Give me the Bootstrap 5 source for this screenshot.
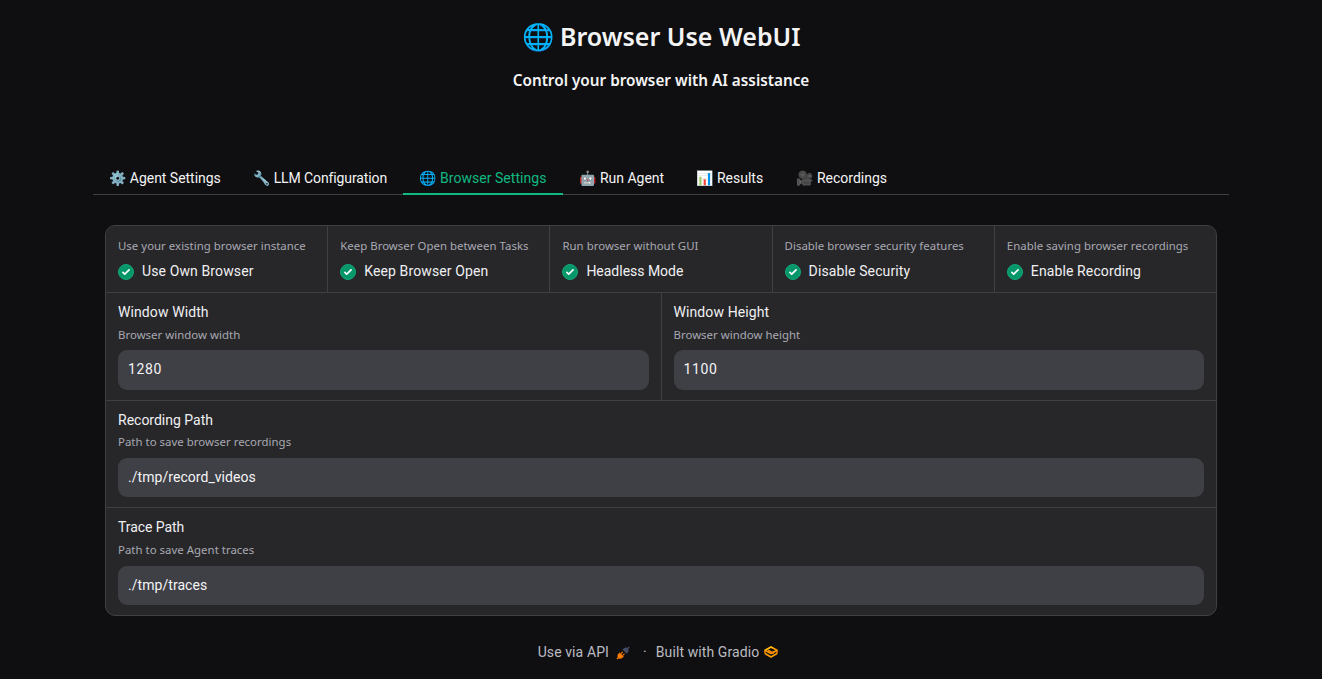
<!DOCTYPE html>
<html lang="en" data-bs-theme="dark">
<head>
<meta charset="utf-8">
<meta name="viewport" content="width=device-width, initial-scale=1">
<title>Browser Use WebUI</title>
<link rel="stylesheet" href="https://cdn.jsdelivr.net/npm/bootstrap@5.3.0/dist/css/bootstrap.min.css">
<style>
  body { background: #0f0f11; color: #f4f4f5; font: 14px/20px Roboto, "Noto Color Emoji", sans-serif; letter-spacing: 0; overflow: hidden; }
  .page-wrap { width: 1136px; margin-left: 93px; }
  .hero { height: 162px; padding-top: 18px; }
  .hero h1 { font: 600 25px/36px "Noto Sans", sans-serif; color: #f4f4f5; margin-bottom: 16px; }
  .hero h1 .globe { font-size: 26px; }
  .hero h2 { font: 600 15.3px/20px "Noto Sans", sans-serif; color: #f4f4f5; }
  .settings-tabs { height: 33px; border-bottom: 1px solid #3f3f46; --bs-nav-link-padding-y: 6px; --bs-nav-link-padding-x: 16px; }
  .settings-tabs .nav-link { color: #f4f4f5; height: 33px; line-height: 20px; white-space: nowrap; border-bottom: 2px solid transparent; }
  .settings-tabs .nav-link.active { color: #10b981; border-color: #10b981; }
  .w-a { width: 144px; letter-spacing: -.03px; } .w-b { width: 166px; letter-spacing: -.11px; } .w-c { width: 160px; letter-spacing: .04px; } .w-d { width: 117px; } .w-e { width: 100px; }
  .panel { margin: 30px 12px 0; height: 391px; background: #27272a; border: 1px solid #3f3f46; border-radius: 10px; overflow: hidden; color: #f0f0f2; }
  .panel-row { border-bottom: 1px solid #3f3f46; }
  .panel-row:last-child { border-bottom: 0; }
  .checks { height: 67px; }
  .panel-cell { flex: 1 1 0; min-width: 0; padding: 0 12px; }
  .panel-cell + .panel-cell { border-left: 1px solid #3f3f46; }
  .hint { font: 11.4px/16px "Noto Sans", sans-serif; letter-spacing: .03px; color: #a9a9b2; white-space: nowrap; }
  .checks .panel-cell { padding-top: 12px; }
  .check-line { display: flex; margin-top: 7px; }
  .check-line .form-check-label { letter-spacing: .12px; }
  .check-line .form-check-label.tight { letter-spacing: -.02px; }
  .tick { width: 16px; height: 16px; margin: 3px 8px 0 0; background: #059669; border: 1px solid #10a877; border-radius: 50%; }
  .fields .panel-cell { padding-top: 9px; }
  .field-label { height: 20px; }
  .h-size .field-label { letter-spacing: .1px; }
  .h-trace .field-label { letter-spacing: -.06px; }
  .fields .hint { margin-top: 5px; }
  .fields .form-control { height: 39px; margin-top: 7px; padding: 0 10px 2px; background: #3f3f46; color: #f4f4f5; border: 0; border-radius: 9px; font-size: 14px; line-height: 20px; letter-spacing: .05px; }
  .h-size { height: 108px; } .h-path { height: 107px; }
  .h-size .form-control { height: 40px; letter-spacing: .6px; }
  .h-path .hint { margin-top: 4px; }
  .h-path .form-control { margin-top: 8px; }
  .h-trace .hint { margin-top: 5px; }
  .h-trace .form-control { margin-top: 8px; }
  .page-foot { margin: 26px 6px 0 0; color: #bbbbc2; height: 20px; letter-spacing: .1px; }
  .plug { margin: 1px 0 0 7px; }
  .foot-dot { margin: 0 9px 0 13px; }
  .stack-logo { margin-left: 5px; }
</style>
</head>
<body>
<div class="page-wrap">
  <header class="hero text-center">
    <h1><span class="globe">🌐</span> Browser Use WebUI</h1>
    <h2 class="mb-0">Control your browser with AI assistance</h2>
  </header>

  <ul class="nav settings-tabs flex-nowrap">
    <li class="nav-item"><a class="nav-link w-a" href="#">⚙️ Agent Settings</a></li>
    <li class="nav-item"><a class="nav-link w-b" href="#">🔧 LLM Configuration</a></li>
    <li class="nav-item"><a class="nav-link w-c active" href="#">🌐 Browser Settings</a></li>
    <li class="nav-item"><a class="nav-link w-d" href="#">🤖 Run Agent</a></li>
    <li class="nav-item"><a class="nav-link w-e" href="#">📊 Results</a></li>
    <li class="nav-item"><a class="nav-link" href="#">🎥 Recordings</a></li>
  </ul>

  <svg class="d-none"><symbol id="check" viewBox="0 0 16 16"><path fill="#fff" d="M12.207 4.793a1 1 0 0 1 0 1.414l-5 5a1 1 0 0 1-1.414 0l-2-2a1 1 0 0 1 1.414-1.414L6.5 9.086l4.293-4.293a1 1 0 0 1 1.414 0z"/></symbol></svg>

  <main class="panel">
    <div class="panel-row checks d-flex">
      <div class="panel-cell"><div class="hint">Use your existing browser instance</div>
        <div class="check-line"><svg class="tick"><use href="#check"/></svg><label class="form-check-label">Use Own Browser</label></div></div>
      <div class="panel-cell"><div class="hint">Keep Browser Open between Tasks</div>
        <div class="check-line"><svg class="tick"><use href="#check"/></svg><label class="form-check-label">Keep Browser Open</label></div></div>
      <div class="panel-cell"><div class="hint">Run browser without GUI</div>
        <div class="check-line"><svg class="tick"><use href="#check"/></svg><label class="form-check-label tight">Headless Mode</label></div></div>
      <div class="panel-cell"><div class="hint">Disable browser security features</div>
        <div class="check-line"><svg class="tick"><use href="#check"/></svg><label class="form-check-label">Disable Security</label></div></div>
      <div class="panel-cell"><div class="hint">Enable saving browser recordings</div>
        <div class="check-line"><svg class="tick"><use href="#check"/></svg><label class="form-check-label">Enable Recording</label></div></div>
    </div>
    <div class="panel-row fields h-size d-flex">
      <div class="panel-cell"><div class="field-label">Window Width</div><div class="hint">Browser window width</div>
        <input class="form-control" value="1280"></div>
      <div class="panel-cell"><div class="field-label">Window Height</div><div class="hint">Browser window height</div>
        <input class="form-control" value="1100"></div>
    </div>
    <div class="panel-row fields h-path d-flex">
      <div class="panel-cell"><div class="field-label">Recording Path</div><div class="hint">Path to save browser recordings</div>
        <input class="form-control" value="./tmp/record_videos"></div>
    </div>
    <div class="panel-row fields h-path h-trace d-flex">
      <div class="panel-cell"><div class="field-label">Trace Path</div><div class="hint">Path to save Agent traces</div>
        <input class="form-control" value="./tmp/traces"></div>
    </div>
  </main>

  <footer class="page-foot d-flex justify-content-center align-items-center">
    <span>Use via API</span>
    <svg class="plug" width="14" height="14" viewBox="0 0 14 14">
      <path d="M1 13l2-2" stroke="#ff7c00" stroke-width="1.4"/>
      <path d="M3.6 6.4 7.8 10.6 6.2 12C4.8 13 3.2 12.8 2.2 11.8S1.2 9.2 2.2 8z" fill="#ff7c00"/>
      <path d="M5 7.5l1.7-1.7M6.8 9.3l1.7-1.7" stroke="#ff7c00" stroke-width="1.1"/>
      <path d="M6.4 3.6 10.6 7.8 12 6.2C13 5 12.8 3.4 11.8 2.4S9 1.2 8 2.2z" fill="#454d64"/>
      <path d="M11.4 2.8 13.2 1" stroke="#454d64" stroke-width="1.4"/>
    </svg>
    <span class="foot-dot">·</span>
    <span>Built with Gradio</span>
    <svg class="stack-logo" width="14" height="12" viewBox="0 0 14 12" fill="none" stroke-linejoin="round">
      <path d="M1 4.2 7 1 13 4.2 7 7.4zM1 7.6 7 10.9 13 7.6" stroke="#ff9d00" stroke-width="1.7"/>
      <path d="M1 4.2V7.6M13 4.2V7.6M4 4.2 10 7.4M7 7.4 10 5.8" stroke="#ff8a00" stroke-width="1.5"/>
      <path d="M1.2 4.2 7 1 9 2" stroke="#ffc21a" stroke-width="1.2"/>
    </svg>
  </footer>
</div>
<script src="https://cdn.jsdelivr.net/npm/bootstrap@5.3.0/dist/js/bootstrap.bundle.min.js"></script>
</body>
</html>
